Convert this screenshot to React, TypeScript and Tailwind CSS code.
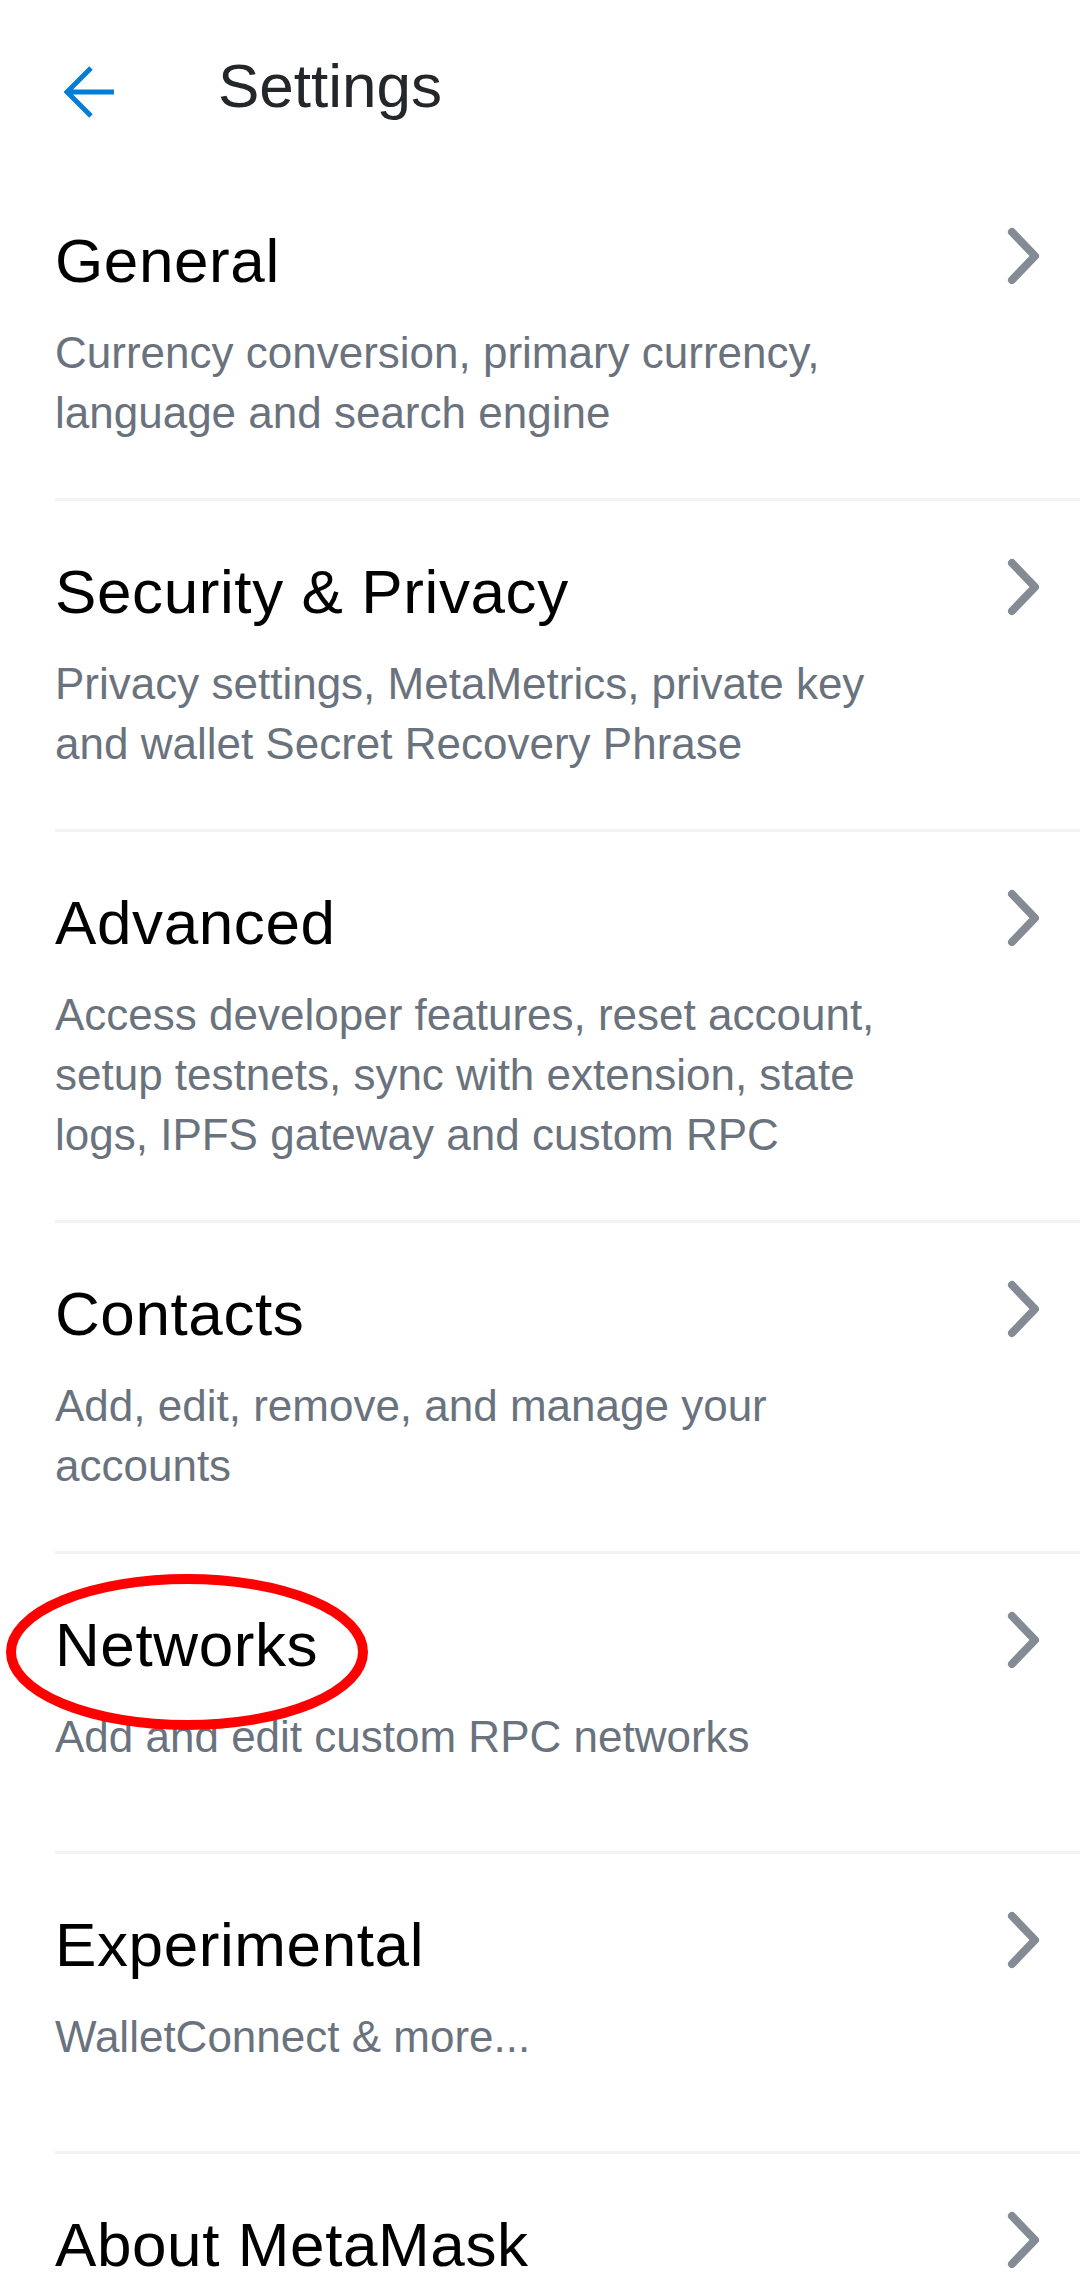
import React from 'react';

type Item = {
  title: string;
  description: string;
  marked?: boolean;
};

const ITEMS: Item[] = [
  { title: 'General', description: 'Currency conversion, primary currency, language and search engine' },
  { title: 'Security & Privacy', description: 'Privacy settings, MetaMetrics, private key and wallet Secret Recovery Phrase' },
  {
    title: 'Advanced',
    description: 'Access developer features, reset account, setup testnets, sync with extension, state logs, IPFS gateway and custom RPC',
  },
  { title: 'Contacts', description: 'Add, edit, remove, and manage your accounts' },
  { title: 'Networks', description: 'Add and edit custom RPC networks', marked: true },
  { title: 'Experimental', description: 'WalletConnect & more...' },
  { title: 'About MetaMask', description: '' },
];

function BackArrow() {
  return (
    <svg width="52" height="52" viewBox="0 0 52 52" fill="none" className="ml-[64px] mt-[66px] shrink-0">
      <path d="M27 2 L3 26 L27 50 M3 26 H50" stroke="#037DD6" strokeWidth="5" strokeLinejoin="miter" />
    </svg>
  );
}

function Chevron() {
  return (
    <svg width="40" height="64" viewBox="0 0 40 64" fill="none" className="shrink-0 -mt-px">
      <path d="M8 8 L31 32 L8 56" stroke="#858B94" strokeWidth="8" strokeLinecap="round" strokeLinejoin="round" />
    </svg>
  );
}

function SettingsRow({ item }: { item: Item }) {
  return (
    <div className="relative">
      {item.marked && (
        <svg width="380" height="170" viewBox="0 0 380 170" fill="none" className="absolute left-0 top-[14px] z-10">
          <ellipse cx="187" cy="84" rx="176" ry="73" stroke="#FF0000" strokeWidth="10" />
        </svg>
      )}
      <div className="min-h-[297px] pt-[55px] pb-[55px] pl-[55px] pr-[36px]">
        <div className="flex items-start justify-between">
          <h2 className="text-[62px] leading-[72px] tracking-[0.6px] text-black">{item.title}</h2>
          <Chevron />
        </div>
        {item.description && (
          <p className="mt-[26px] max-w-[860px] text-[44px] leading-[60px] text-[#6A737D]">{item.description}</p>
        )}
      </div>
      <div className="ml-[55px] h-[3px] bg-[#F2F3F4]" />
    </div>
  );
}

export default function App() {
  return (
    <div className="w-[1080px] h-[2275px] overflow-hidden bg-white font-['Liberation_Sans',Arial,sans-serif]">
      <header className="flex h-[170px] items-start">
        <BackArrow />
        <h1 className="ml-[102px] mt-[50px] text-[62px] leading-[72px] text-[#24272A]">Settings</h1>
      </header>
      {ITEMS.map((item) => (
        <SettingsRow key={item.title} item={item} />
      ))}
    </div>
  );
}
